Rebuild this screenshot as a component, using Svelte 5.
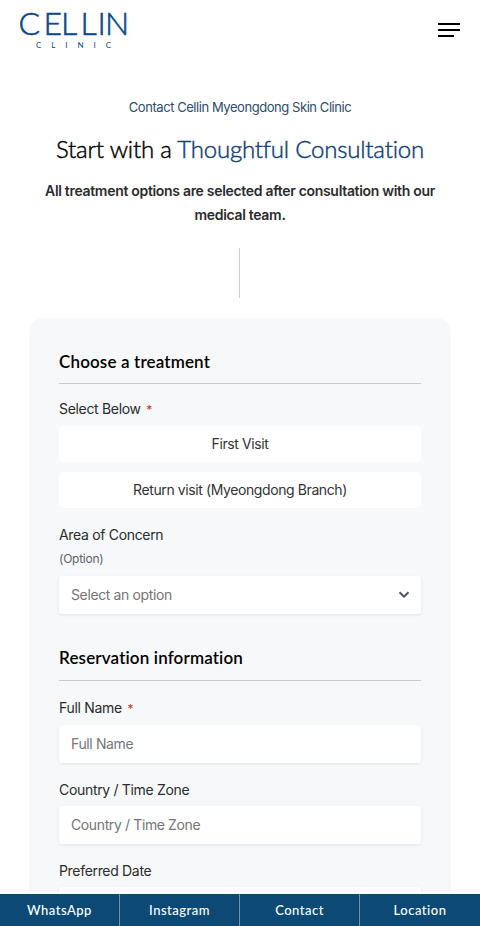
<script lang="ts">
  let visitType = $state('');
  let menuOpen = $state(false);

  const visitTypes = ['First Visit', 'Return visit (Myeongdong Branch)'];

  const fields = [
    { id: 'name', label: 'Full Name', required: true },
    { id: 'country', label: 'Country / Time Zone', required: false },
    { id: 'date', label: 'Preferred Date', required: false }
  ];

  const quickLinks = ['WhatsApp', 'Instagram', 'Contact', 'Location'];
</script>

<div class="page">
  <header>
    <a class="logo" href="#home" aria-label="Cellin Clinic">
      <svg width="112" height="42" viewBox="0 0 112 42">
        <text class="logo-name" x="0.5 25.5 43 62.5 79.5 87" y="26">CELLIN</text>
        <text class="logo-sub" x="18" y="38.5" textLength="75">CLINIC</text>
      </svg>
    </a>
    <button class="menu" aria-label="Menu" aria-expanded={menuOpen} onclick={() => (menuOpen = !menuOpen)}>
      <span></span>
      <span></span>
      <span class="short"></span>
    </button>
  </header>

  <section class="intro">
    <p class="eyebrow">Contact Cellin Myeongdong Skin Clinic</p>
    <h1>Start with a <em>Thoughtful Consultation</em></h1>
    <p class="lead">All treatment options are selected after consultation with our medical team.</p>
    <div class="divider"></div>
  </section>

  <form class="panel">
    <h2 class="h-choose">Choose a treatment</h2>
    <div class="label">Select Below <span class="star">*</span></div>
    <div class="choices">
      {#each visitTypes as type}
        <button type="button" aria-pressed={visitType === type} onclick={() => (visitType = type)}>{type}</button>
      {/each}
    </div>

    <div class="label area">Area of Concern</div>
    <div class="hint">(Option)</div>
    <button type="button" class="box select">
      Select an option
      <svg width="12" height="8" viewBox="0 0 12 8" fill="none" stroke="#475569" stroke-width="2">
        <path d="M1.5 1.3 6 5.7l4.5-4.4" />
      </svg>
    </button>

    <h2 class="h-info">Reservation information</h2>
    {#each fields as field}
      <div class="field">
        <label class="label" for={field.id}>
          {field.label}
          {#if field.required}<span class="star">*</span>{/if}
        </label>
        <input class="box" id={field.id} type="text" placeholder={field.label} />
      </div>
    {/each}
  </form>

  <nav>
    {#each quickLinks as link}
      <a href="#{link.toLowerCase()}">{link}</a>
    {/each}
  </nav>
</div>

<style>
  :global(body) {
    background: #fff;
  }

  .page {
    height: 926px;
    display: flex;
    flex-direction: column;
    overflow: hidden;
    font-family: Inter, sans-serif;
    color: #2b2b2b;
  }

  header {
    height: 60px;
    flex: none;
    display: flex;
    justify-content: space-between;
    align-items: center;
    padding: 0 20px 0 18px;
    box-sizing: border-box;
  }

  .logo svg {
    display: block;
    overflow: visible;
  }

  .logo-name {
    font-family: Lato, sans-serif;
    font-size: 32px;
    font-weight: 300;
    fill: #0b4a8c;
    stroke: #0b4a8c;
    stroke-width: 0.6px;
  }

  .logo-sub {
    font-family: Lato, sans-serif;
    font-size: 8px;
    fill: #0b4a8c;
  }

  button {
    border: none;
    padding: 0;
    font-family: inherit;
    cursor: pointer;
  }

  .menu {
    width: 22px;
    display: flex;
    flex-direction: column;
    gap: 4px;
    background: none;
  }

  .menu span {
    height: 2px;
    background: #000;
  }

  .menu .short {
    width: 16px;
  }

  .intro {
    flex: none;
    height: 258px;
    padding-top: 37px;
    box-sizing: border-box;
    display: flex;
    flex-direction: column;
    align-items: center;
    text-align: center;
  }

  p, h1, h2 {
    margin: 0;
  }

  .eyebrow {
    font-size: 13px;
    line-height: 20px;
    letter-spacing: -0.44px;
    color: #2b4d6e;
  }

  h1 {
    margin-top: 16px;
    font-family: Lato, sans-serif;
    font-size: 24px;
    font-weight: 300;
    line-height: 32px;
    letter-spacing: -0.2px;
    font-variant-ligatures: none;
    color: #000;
    white-space: nowrap;
    -webkit-text-stroke: 0.45px;
  }

  h1 em {
    font-style: normal;
    color: #0e4174;
  }

  .lead {
    width: 400px;
    margin-top: 14px;
    font-size: 14px;
    font-weight: 600;
    line-height: 24px;
    letter-spacing: -0.31px;
  }

  .divider {
    width: 1px;
    height: 50px;
    margin: 21px 1px 0 0;
    background: #c9cbce;
  }

  .panel {
    flex: none;
    height: 574px;
    margin: 0 29px;
    padding: 31px 30px 0;
    box-sizing: border-box;
    overflow: hidden;
    background: #f7f8fa;
    border-radius: 15px 15px 0 0;
  }

  h2 {
    font-family: Lato, sans-serif;
    font-size: 17px;
    font-weight: 600;
    line-height: 26px;
    letter-spacing: 0.15px;
    font-variant-ligatures: none;
    color: #000;
    border-bottom: 1px solid #c8cbd0;
  }

  .h-choose {
    padding-bottom: 8px;
    margin-bottom: 15px;
  }

  .h-info {
    padding-bottom: 9px;
    margin: 31px 0 17px;
  }

  .label {
    display: block;
    height: 20px;
    font-size: 14px;
    line-height: 20px;
    letter-spacing: -0.32px;
  }

  .star {
    margin-left: 2px;
    font-size: 12px;
    color: #d0311e;
  }

  .choices {
    display: grid;
    gap: 10px;
    margin-top: 7px;
  }

  .choices button {
    height: 36px;
    padding-bottom: 1px;
    font-size: 14px;
    letter-spacing: -0.4px;
    color: #333;
    background: #fff;
    border-radius: 5px;
  }

  .area {
    margin-top: 17px;
  }

  .hint {
    margin-top: 4px;
    font-size: 12px;
    line-height: 20px;
    letter-spacing: -0.25px;
    color: #5c5f6b;
  }

  .box {
    display: block;
    width: 100%;
    height: 38px;
    padding: 0 12px 1px;
    box-sizing: border-box;
    font-family: inherit;
    font-size: 14px;
    letter-spacing: -0.38px;
    color: #757575;
    background: #fff;
    border: none;
    border-radius: 3px;
    box-shadow: 0 1px 3px rgba(30, 50, 80, 0.1);
  }

  .box::placeholder {
    color: #757575;
    opacity: 1;
  }

  .select {
    margin-top: 7px;
    padding-right: 11px;
    display: flex;
    align-items: center;
    justify-content: space-between;
  }

  .field {
    margin-bottom: 17px;
  }

  .field .box {
    margin-top: 7px;
  }

  .field + .field .box {
    margin-top: 6px;
  }

  nav {
    flex: none;
    height: 32px;
    margin-top: 2px;
    display: grid;
    grid-template-columns: repeat(4, 1fr);
    background: #0c4a75;
  }

  nav a {
    display: flex;
    align-items: center;
    justify-content: center;
    padding-bottom: 1px;
    border-right: 1px solid #6e93ae;
    font-family: Lato, sans-serif;
    font-size: 13px;
    font-weight: 500;
    letter-spacing: 0.5px;
    color: #fff;
    text-decoration: none;
  }

  nav a:last-child {
    border-right: none;
  }
</style>
